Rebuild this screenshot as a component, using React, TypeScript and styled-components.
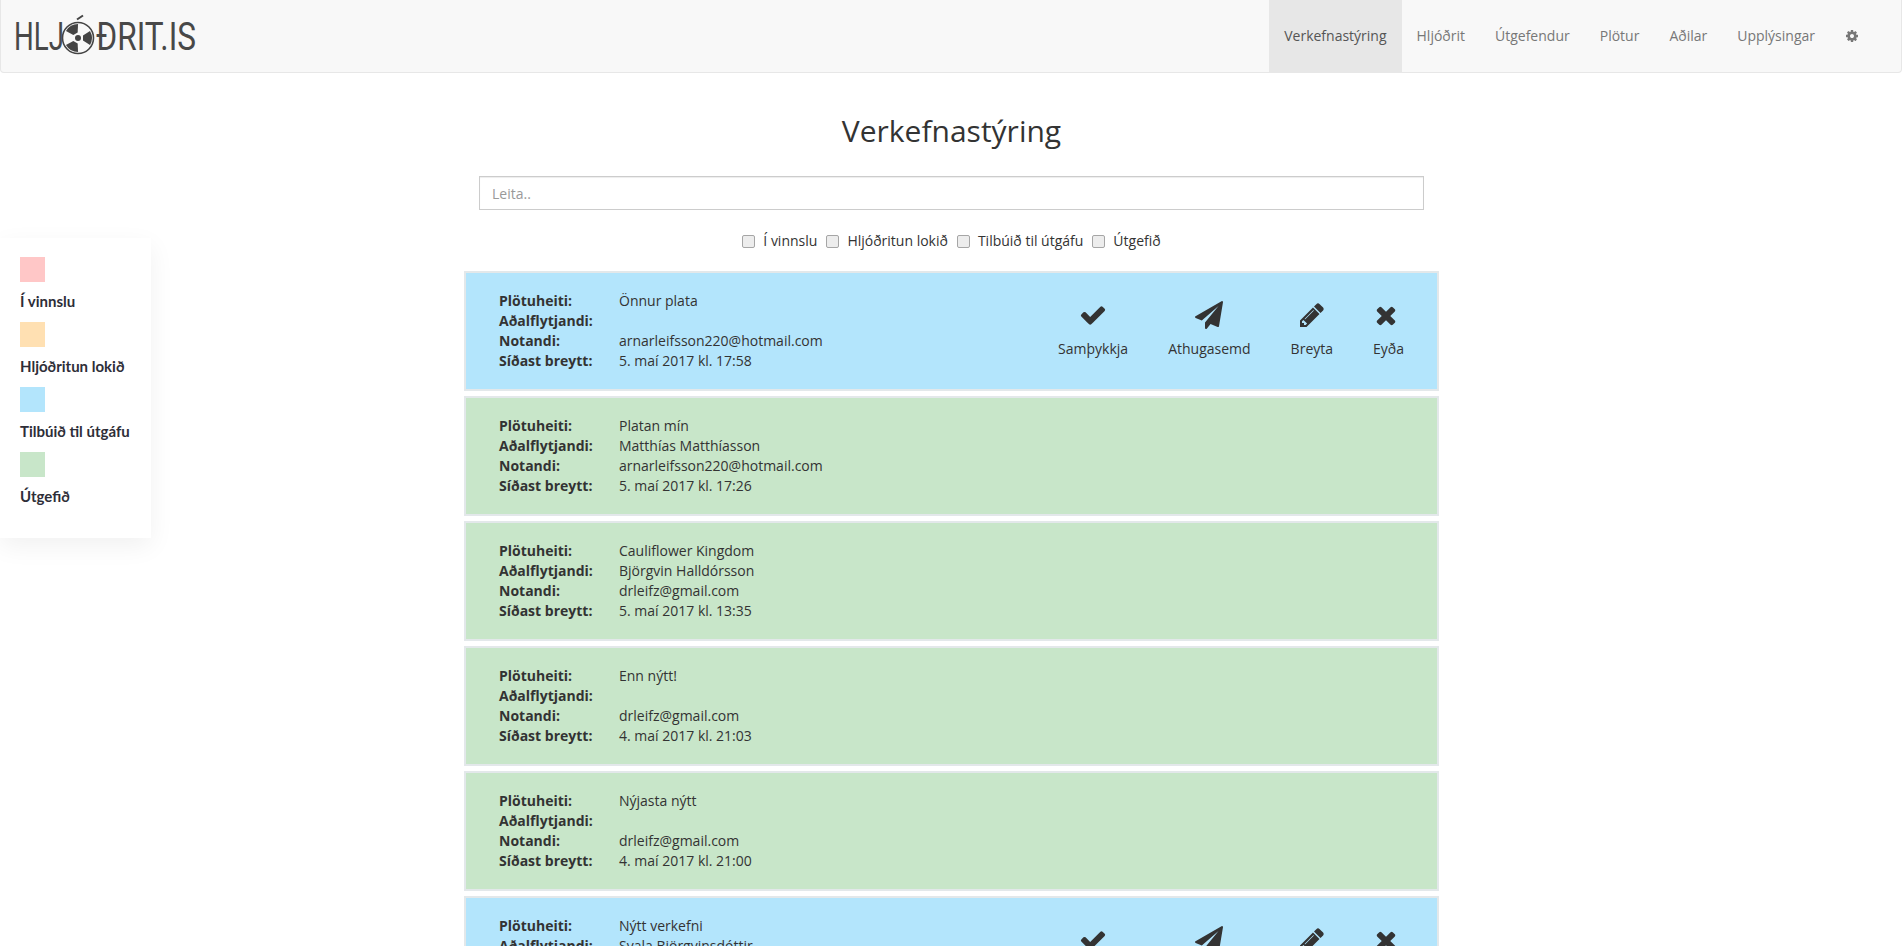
import React from 'react';
import styled, { createGlobalStyle } from 'styled-components';

const GlobalStyle = createGlobalStyle`
	* {
		box-sizing: border-box;
	}
	html,
	body {
		margin: 0;
		height: 946px;
		overflow: hidden;
		background: #fff;
		font-family: 'Open Sans', 'Liberation Sans', sans-serif;
		font-size: 14px;
		line-height: 20px;
		color: #333;
	}
`;

const Navbar = styled.nav`
	display: flex;
	justify-content: space-between;
	height: 73px;
	background: #f8f8f8;
	border: 1px solid #e7e7e7;
	border-top: 0;
	border-radius: 0 0 4px 4px;
`;

const LogoText = styled.text`
	font-family: 'Roboto', sans-serif;
	font-size: 38px;
	font-weight: 400;
	fill: #484848;
`;

const NavList = styled.ul`
	display: flex;
	list-style: none;
	margin: 0;
	padding: 0 27px 0 0;
`;

const NavItem = styled.li<{ $active?: boolean }>`
	display: flex;
	align-items: center;
	padding: 0 15px;
	color: ${(props) => (props.$active ? '#555' : '#777')};
	background: ${(props) => (props.$active ? '#e7e7e7' : 'transparent')};
`;

const Main = styled.main`
	width: 975px;
	margin: 0 463px 0 464px;
`;

const Title = styled.h1`
	margin: 41px 0 0;
	font-size: 30px;
	font-weight: 400;
	line-height: 33px;
	text-align: center;
`;

const Search = styled.input`
	display: block;
	width: 945px;
	height: 34px;
	margin: 29px auto 0;
	padding: 6px 12px;
	border: 1px solid #ccc;
	font: inherit;
	color: #555;
	box-shadow: inset 0 1px 1px rgba(0, 0, 0, 0.075);
	&::placeholder {
		color: #999;
	}
`;

const Filters = styled.div`
	display: flex;
	justify-content: center;
	gap: 9px;
	margin: 21px 0 0;
`;

const Filter = styled.label`
	display: flex;
	align-items: center;
	gap: 8px;
	height: 20px;
`;

const Box = styled.span`
	width: 13px;
	height: 13px;
	border: 1px solid #a6a6a6;
	border-radius: 2px;
	background: #ededed;
`;

const TaskList = styled.div`
	display: flex;
	flex-direction: column;
	gap: 5px;
	margin-top: 20px;
`;

const Task = styled.article<{ $color: string }>`
	display: flex;
	flex: none;
	justify-content: space-between;
	align-items: center;
	height: 120px;
	padding: 0 33px 0 33px;
	background: ${(props) => props.$color};
	border: 2px solid #e3e8ea;
`;

const Details = styled.dl`
	display: grid;
	grid-template-columns: 120px auto;
	margin: 0;
`;

const Term = styled.dt`
	font-weight: 700;
`;

const Value = styled.dd`
	margin: 0;
	min-height: 20px;
`;

const Actions = styled.div`
	display: flex;
	gap: 40px;
`;

const Action = styled.div`
	display: flex;
	flex-direction: column;
	align-items: center;
	gap: 10px;
	margin-top: -2px;
`;

const Icon = styled.svg<{ $size: number }>`
	display: block;
	width: ${(props) => props.$size}px;
	height: ${(props) => props.$size}px;
	fill: currentColor;
`;

const Legend = styled.aside`
	position: absolute;
	top: 238px;
	left: 0;
	width: 151px;
	height: 300px;
	padding: 19px 20px;
	background: #fff;
	box-shadow: 0 8px 24px rgba(0, 0, 0, 0.06);
	font-family: 'Lato', sans-serif;
	font-weight: 700;
	font-size: 15px;
	color: #2e2e38;
`;

const LegendRow = styled.div`
	height: 65px;
`;

const Swatch = styled.div<{ $color: string }>`
	width: 25px;
	height: 25px;
	margin-bottom: 9px;
	background: ${(props) => props.$color};
`;

const BLUE = '#b3e5fc';
const GREEN = '#c8e6c9';

const legend = [
	{ label: 'Í vinnslu', color: '#ffc7c7' },
	{ label: 'Hljóðritun lokið', color: '#ffe0b2' },
	{ label: 'Tilbúið til útgáfu', color: BLUE },
	{ label: 'Útgefið', color: GREEN },
];

const tasks = [
	{ title: 'Önnur plata', artist: '', user: 'arnarleifsson220@hotmail.com', date: '5. maí 2017 kl. 17:58', color: BLUE },
	{ title: 'Platan mín', artist: 'Matthías Matthíasson', user: 'arnarleifsson220@hotmail.com', date: '5. maí 2017 kl. 17:26', color: GREEN },
	{ title: 'Cauliflower Kingdom', artist: 'Björgvin Halldórsson', user: 'drleifz@gmail.com', date: '5. maí 2017 kl. 13:35', color: GREEN },
	{ title: 'Enn nýtt!', artist: '', user: 'drleifz@gmail.com', date: '4. maí 2017 kl. 21:03', color: GREEN },
	{ title: 'Nýjasta nýtt', artist: '', user: 'drleifz@gmail.com', date: '4. maí 2017 kl. 21:00', color: GREEN },
	{ title: 'Nýtt verkefni', artist: 'Svala Björgvinsdóttir', user: 'drleifz@gmail.com', date: '4. maí 2017 kl. 20:41', color: BLUE },
];

const ICONS = {
	check: 'M1671 566q0 40-28 68l-724 724-136 136q-28 28-68 28t-68-28l-136-136-362-362q-28-28-28-68t28-68l136-136q28-28 68-28t68 28l294 295 656-657q28-28 68-28t68 28l136 136q28 28 28 68z',
	plane: 'M1764 11q33 24 27 64l-256 1536q-5 29-32 45-14 8-31 8-11 0-24-5l-453-185-242 295q-18 23-49 23-13 0-22-4-19-7-30.5-23.5t-11.5-36.5v-349l864-1059-1069 925-395-162q-37-14-40-55-2-40 32-59l1664-960q15-9 32-9 20 0 36 11z',
	pencil: 'M491 1536l91-91-235-235-91 91v107h128v128h107zm523-928q0-22-22-22-10 0-17 7l-542 542q-7 7-7 17 0 22 22 22 10 0 17-7l542-542q7-7 7-17zm-54-192l416 416-832 832h-416v-416zm683 96q0 53-37 90l-166 166-416-416 166-165q36-38 90-38 53 0 91 38l235 234q37 39 37 91z',
	times: 'M1298 1322q0 40-28 68l-136 136q-28 28-68 28t-68-28l-294-294-294 294q-28 28-68 28t-68-28l-136-136q-28-28-28-68t28-68l294-294-294-294q-28-28-28-68t28-68l136-136q28-28 68-28t68 28l294 294 294-294q28-28 68-28t68 28l136 136q28 28 28 68t-28 68l-294 294 294 294q28 28 28 68z',
	cog: 'M1152 896q0-106-75-181t-181-75-181 75-75 181 75 181 181 75 181-75 75-181zm512-109v222q0 12-8 23t-20 13l-185 28q-19 54-39 91 35 50 107 138 10 12 10 25t-9 23q-27 37-99 108t-94 71q-12 0-26-9l-138-108q-44 23-91 38-16 136-29 186-7 28-36 28h-222q-14 0-24.5-8.5t-11.5-21.5l-28-184q-49-16-90-37l-141 107q-10 9-25 9-14 0-25-11-126-114-165-168-7-10-7-23 0-12 8-23 15-21 51-66.5t54-70.5q-27-50-41-99l-183-27q-13-2-21-12.5t-8-23.5v-222q0-12 8-23t19-13l186-28q14-46 39-92-40-57-107-138-10-12-10-24 0-10 9-23 26-36 98.5-107.5t94.5-71.5q13 0 26 10l138 107q44-23 91-38 16-136 29-186 7-28 36-28h222q14 0 24.5 8.5t11.5 21.5l28 184q49 16 90 37l142-107q9-9 24-9 13 0 25 10 129 119 165 170 7 8 7 22 0 12-8 23-15 21-51 66.5t-54 70.5q26 50 41 98l183 28q13 2 21 12.5t8 23.5z',
};

const actions = [
	{ label: 'Samþykkja', icon: ICONS.check },
	{ label: 'Athugasemd', icon: ICONS.plane },
	{ label: 'Breyta', icon: ICONS.pencil },
	{ label: 'Eyða', icon: ICONS.times },
];

const Glyph = ({ d, size }: { d: string; size: number }) => (
	<Icon $size={size} viewBox="0 0 1792 1792" aria-hidden="true">
		<path d={d} />
	</Icon>
);

const Logo = () => (
	<svg width="210" height="72" viewBox="0 0 210 72">
		<LogoText x="13" y="50" textLength="50" lengthAdjust="spacingAndGlyphs">HLJ</LogoText>
		<LogoText x="95" y="50" textLength="100" lengthAdjust="spacingAndGlyphs">ÐRIT.IS</LogoText>
		<g transform="translate(77 38)" fill="#444" stroke="none">
			<circle r="15.5" fill="none" stroke="#444" strokeWidth="1.6" />
			<circle r="3" />
			{[0, 120, 240].map((angle) => (
				<path key={angle} transform={`rotate(${angle})`} d="M5 -2.5 L12 -7 A14 14 0 0 1 12 7 L5 2.5 Z" />
			))}
			<path d="M-1 -18.5 L5 -22.5" fill="none" stroke="#444" strokeWidth="2" />
		</g>
	</svg>
);

const App = () => (
	<>
		<GlobalStyle />
		<Navbar>
			<Logo />
			<NavList>
				<NavItem $active>Verkefnastýring</NavItem>
				<NavItem>Hljóðrit</NavItem>
				<NavItem>Útgefendur</NavItem>
				<NavItem>Plötur</NavItem>
				<NavItem>Aðilar</NavItem>
				<NavItem>Upplýsingar</NavItem>
				<NavItem>
					<Glyph d={ICONS.cog} size={14} />
				</NavItem>
			</NavList>
		</Navbar>
		<Legend>
			{legend.map((item) => (
				<LegendRow key={item.label}>
					<Swatch $color={item.color} />
					{item.label}
				</LegendRow>
			))}
		</Legend>
		<Main>
			<Title>Verkefnastýring</Title>
			<Search placeholder="Leita.." />
			<Filters>
				{legend.map((item) => (
					<Filter key={item.label}>
						<Box />
						{item.label}
					</Filter>
				))}
			</Filters>
			<TaskList>
				{tasks.map((task) => (
					<Task key={task.title} $color={task.color}>
						<Details>
							<Term>Plötuheiti:</Term>
							<Value>{task.title}</Value>
							<Term>Aðalflytjandi:</Term>
							<Value>{task.artist}</Value>
							<Term>Notandi:</Term>
							<Value>{task.user}</Value>
							<Term>Síðast breytt:</Term>
							<Value>{task.date}</Value>
						</Details>
						{task.color === BLUE && (
							<Actions>
								{actions.map((action) => (
									<Action key={action.label}>
										<Glyph d={action.icon} size={28} />
										{action.label}
									</Action>
								))}
							</Actions>
						)}
					</Task>
				))}
			</TaskList>
		</Main>
	</>
);

export default App;
